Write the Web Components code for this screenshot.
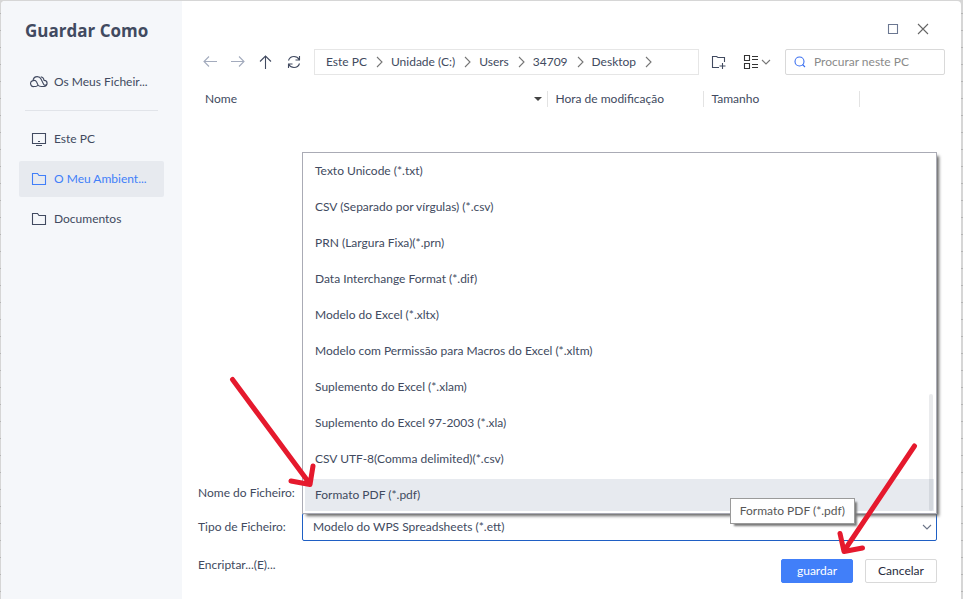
<!DOCTYPE html>
<html lang="pt">
<head>
<meta charset="utf-8">
<meta name="viewport" content="width=device-width, initial-scale=1">
<title>Guardar Como</title>
<style>
  * { box-sizing: border-box; }
  body {
    margin: 0;
    min-height: 100vh;
    padding: 1px 2px 0 1px;
    display: flex;
    font: 12px/16px Lato, "Open Sans", sans-serif;
    color: #414a60;
    /* spreadsheet grid behind the dialog */
    background:
      repeating-linear-gradient(to bottom, transparent 0 13px, #b5b5b5 13px 14px, transparent 14px 17px),
      #d6d6d6;
  }
</style>
</head>
<body>
<save-dialog>
  <side-nav slot="nav" heading="Guardar Como">
    <nav-item slot="top" icon="cloud">Os Meus Ficheir...</nav-item>
    <nav-item icon="pc">Este PC</nav-item>
    <nav-item icon="folder" active>O Meu Ambient...</nav-item>
    <nav-item icon="folder">Documentos</nav-item>
  </side-nav>
  <window-controls></window-controls>
  <path-toolbar path="Este PC/Unidade (C:)/Users/34709/Desktop"></path-toolbar>
  <file-table></file-table>
  <save-form slot="form"></save-form>
</save-dialog>
<pointer-arrows></pointer-arrows>

<script>
const ICONS = {
  cloud: `<svg width="18" height="16" viewBox="0 0 18 16"><path d="M5.500 12.500H4.200A3 3 0 0 1 3 6.600C3.300 4.300 5 2.600 7.300 2.600c1.800 0 3 .8 3.700 2.300l2.600 5.300c.9 1.800 3.500 1 3.500-1.200 0-1.700-1.500-2.700-3-2.400M3 6.800c1.500-.7 2.900-.1 3.600 1.200l1.300 2.700c.8 1.500 2.200 1.800 3.500 1.800h2.600a3 3 0 0 0 3.100-3.100c0-1.800-1.300-3-3-3-.3-2.100-1.600-3.500-3.300-3.700M5.500 12.500c1.300 0 2-.7 2.400-1.600"/></svg>`,
  pc: `<svg width="18" height="16" viewBox="0 0 18 16"><path d="M2.500 2.500h13v10h-13zM6 14.500h6M8 10.500h2"/></svg>`,
  folder: `<svg width="18" height="16" viewBox="0 0 18 16"><path d="M2.500 2.500h5l1.500 2h6.500v9h-13z"/></svg>`,
  back: `<svg width="16" height="16" viewBox="0 0 16 16"><path d="M15 7.500H2M7 2.500l-5 5 5 5"/></svg>`,
  forward: `<svg width="16" height="16" viewBox="0 0 16 16"><path d="M1 7.500h13M9 2.500l5 5-5 5"/></svg>`,
  up: `<svg width="16" height="16" viewBox="0 0 16 16"><path d="M7.500 15V2M2 7.500L7.500 2 13 7.500"/></svg>`,
  refresh: `<svg width="16" height="16" viewBox="0 0 16 16"><path d="M2.500 6.500C3.300 4 5.500 2.500 8 2.500c2.300 0 4 1 5.200 3M13.500 2v4h-4M13.500 9.500c-.8 2.500-3 4-5.500 4-2.300 0-4-1-5.200-3M2.500 14v-4h4"/></svg>`,
  newFolder: `<svg width="16" height="16" viewBox="0 0 16 16"><path d="M8 13.500H1.500v-11h4l1.500 1h6.500V8M11.500 9v6M8.500 12h6"/></svg>`,
  view: `<svg width="16" height="16" viewBox="0 0 16 16"><path d="M1.500 1.500h5v5h-5zM1.500 9.500h5v5h-5zM9 2.500h6M9 5.500h6M9 10.500h6M9 13.500h6"/></svg>`,
  down: `<svg width="10" height="8" viewBox="0 0 10 8"><path d="M1 2l4 4 4-4"/></svg>`,
  right: `<svg width="8" height="12" viewBox="0 0 8 12"><path d="M2 1l5 5-5 5"/></svg>`,
  search: `<svg width="12" height="12" viewBox="0 0 12 12"><circle cx="5.500" cy="5.500" r="4.500"/><path d="M8.500 8.500l2.500 2.500"/></svg>`,
  maximize: `<svg width="12" height="12" viewBox="0 0 12 12"><path d="M1.500 1.500h9v9h-9z"/></svg>`,
  close: `<svg width="12" height="12" viewBox="0 0 12 12"><path d="M1 1l10 10M11 1L1 11"/></svg>`
};

const BASE = `
  * { box-sizing: border-box; }
  :host { display: block; }
  button, input, select { font: inherit; color: inherit; margin: 0; }
  button { padding: 0; border: 0; background: none; cursor: pointer; }
  svg { display: block; flex: none; fill: none; stroke: currentColor; stroke-width: 1.1; }
`;

class SaveDialog extends HTMLElement {
  constructor() {
    super();
    this.attachShadow({ mode: "open" }).innerHTML = `
      <style>
        ${BASE}
        :host {
          flex: 1;
          display: flex;
          background: #fff;
          border-radius: 4px 4px 0 0;
          overflow: hidden;
        }
        main {
          flex: 1;
          min-width: 0;
          display: flex;
          flex-direction: column;
          padding: 16px 16px 16px 14px;
        }
        .fill { flex: 1; }
      </style>
      <slot name="nav"></slot>
      <main>
        <slot></slot>
        <div class="fill"></div>
        <slot name="form"></slot>
      </main>
    `;
  }
}

class SideNav extends HTMLElement {
  connectedCallback() {
    this.attachShadow({ mode: "open" }).innerHTML = `
      <style>
        ${BASE}
        :host { flex: none; width: 181px; background: #f5f7fa; padding: 16px 18px; }
        h1 { margin: 0 0 19px; padding-left: 6px; font: 700 17px/28px "Open Sans", sans-serif; white-space: nowrap; }
        hr { margin: 10px 6px 10px; border: 0; border-top: 1px solid #e1e4e9; }
        nav { display: flex; flex-direction: column; gap: 4px; }
      </style>
      <h1>${this.getAttribute("heading")}</h1>
      <slot name="top"></slot>
      <hr>
      <nav><slot></slot></nav>
    `;
  }
}

class NavItem extends HTMLElement {
  connectedCallback() {
    this.attachShadow({ mode: "open" }).innerHTML = `
      <style>
        ${BASE}
        a {
          display: flex;
          align-items: center;
          gap: 6px;
          height: 36px;
          padding: 0 11px;
          border-radius: 2px;
          color: inherit;
          text-decoration: none;
          white-space: nowrap;
        }
        :host([active]) a { background: #e7eaef; color: #417ff9; }
      </style>
      <a href="#">${ICONS[this.getAttribute("icon")]}<span><slot></slot></span></a>
    `;
  }
}

class WindowControls extends HTMLElement {
  connectedCallback() {
    this.attachShadow({ mode: "open" }).innerHTML = `
      <style>
        ${BASE}
        :host { display: flex; justify-content: flex-end; gap: 18px; padding: 6px 16px 0 0; color: #6b7791; }
        .close { color: #666; }
      </style>
      <button aria-label="Maximizar">${ICONS.maximize}</button>
      <button class="close" aria-label="Fechar">${ICONS.close}</button>
    `;
  }
}

class PathToolbar extends HTMLElement {
  connectedCallback() {
    const crumbs = this.getAttribute("path").split("/")
      .map(name => `<a href="#">${name}</a>${ICONS.right}`).join("");

    this.attachShadow({ mode: "open" }).innerHTML = `
      <style>
        ${BASE}
        :host { display: flex; align-items: center; padding-top: 14px; }
        .tool { width: 28px; height: 26px; display: flex; align-items: center; justify-content: center; flex: none; }
        .tool:disabled { color: #a3abbd; }
        .path {
          flex: 1;
          min-width: 0;
          height: 26px;
          margin: 0 6px;
          padding: 0 11px;
          display: flex;
          align-items: center;
          gap: 8px;
          border: 1px solid #e6e6e6;
          white-space: nowrap;
        }
        .path a { color: inherit; text-decoration: none; }
        .path svg { color: #777; }
        .view { width: 36px; margin-left: 6px; gap: 2px; color: #333; }
        .view svg + svg { color: #777; }
        .search {
          width: 160px;
          height: 26px;
          margin-left: 10px;
          padding: 0 8px;
          display: flex;
          align-items: center;
          gap: 8px;
          border: 1px solid #d9d9d9;
          border-radius: 2px;
          color: #3a6ff0;
        }
        input { flex: 1; min-width: 0; padding: 0; border: 0; outline: 0; background: none; }
        input::placeholder { color: #8a8a8a; opacity: 1; }
      </style>
      <button class="tool" aria-label="Anterior" disabled>${ICONS.back}</button>
      <button class="tool" aria-label="Seguinte" disabled>${ICONS.forward}</button>
      <button class="tool" aria-label="Subir">${ICONS.up}</button>
      <button class="tool" aria-label="Atualizar">${ICONS.refresh}</button>
      <nav class="path">${crumbs}</nav>
      <button class="tool" aria-label="Nova pasta">${ICONS.newFolder}</button>
      <button class="tool view" aria-label="Vista">${ICONS.view}${ICONS.down}</button>
      <label class="search">${ICONS.search}<input type="text" placeholder="Procurar neste PC" aria-label="Procurar"></label>
    `;
  }
}

class FileTable extends HTMLElement {
  connectedCallback() {
    this.attachShadow({ mode: "open" }).innerHTML = `
      <style>
        ${BASE}
        :host { padding: 16px 0 0 1px; }
        table { width: 100%; table-layout: fixed; border-collapse: collapse; }
        th { padding: 0; font-weight: normal; text-align: left; }
        th div { display: flex; align-items: center; justify-content: space-between; height: 16px; padding: 0 5px 0 8px; }
        .date, .size { width: 156px; }
        .rest { width: 86px; }
        th + th { border-left: 1px solid #e3e3e3; }
        .sort { border: 4px solid transparent; border-top-color: #444; border-bottom: 0; }
      </style>
      <table>
        <thead>
          <tr>
            <th><div>Nome<span class="sort"></span></div></th>
            <th class="date"><div>Hora de modificação</div></th>
            <th class="size"><div>Tamanho</div></th>
            <th class="rest"></th>
          </tr>
        </thead>
      </table>
    `;
  }
}

class SaveForm extends HTMLElement {
  connectedCallback() {
    this.attachShadow({ mode: "open" }).innerHTML = `
      <style>
        ${BASE}
        :host { padding: 0 8px 0 2px; }
        .row { display: flex; align-items: center; height: 28px; margin-bottom: 6px; }
        .row label { flex: none; width: 104px; white-space: nowrap; }
        .field { flex: 1; min-width: 0; position: relative; }
        input, select {
          display: block;
          width: 100%;
          height: 28px;
          padding: 0 10px;
          border: 1px solid #d9d9d9;
          border-radius: 2px;
          background: #fff;
          appearance: none;
          outline: 0;
        }
        select { border-color: #1f5fc4; }
        .field svg { position: absolute; right: 5px; top: 10px; color: #6b7487; pointer-events: none; }
        type-list { position: absolute; left: 0; right: 0; bottom: 27px; }
        footer { display: flex; align-items: flex-start; gap: 12px; padding-top: 12px; }
        .encrypt { margin: -2px auto 0 0; }
        .action {
          width: 72px;
          height: 24px;
          border: 1px solid #d9d9d9;
          border-radius: 2px;
          color: #262b3d;
        }
        .primary { border-color: #417ff9; background: #417ff9; color: #fff; }
      </style>
      <div class="row">
        <label for="name">Nome do Ficheiro:</label>
        <div class="field"><input id="name" type="text"></div>
      </div>
      <div class="row">
        <label for="type">Tipo de Ficheiro:</label>
        <div class="field">
          <select id="type"><option>Modelo do WPS Spreadsheets (*.ett)</option></select>
          ${ICONS.down}
          <type-list></type-list>
        </div>
      </div>
      <footer>
        <button class="encrypt">Encriptar...(E)...</button>
        <button class="action primary">guardar</button>
        <button class="action">Cancelar</button>
      </footer>
    `;
  }
}

class TypeList extends HTMLElement {
  connectedCallback() {
    const types = [
      "Texto Unicode (*.txt)",
      "CSV (Separado por vírgulas) (*.csv)",
      "PRN (Largura Fixa)(*.prn)",
      "Data Interchange Format (*.dif)",
      "Modelo do Excel (*.xltx)",
      "Modelo com Permissão para Macros do Excel (*.xltm)",
      "Suplemento do Excel (*.xlam)",
      "Suplemento do Excel 97-2003 (*.xla)",
      "CSV UTF-8(Comma delimited)(*.csv)",
      "Formato PDF (*.pdf)"
    ];

    this.attachShadow({ mode: "open" }).innerHTML = `
      <style>
        ${BASE}
        :host {
          padding: 2px;
          border: 1px solid #aaabb5;
          background: #fff;
          box-shadow: 3px 3px 3px -1px #666;
        }
        .list { display: flex; flex-direction: column; gap: 4px; }
        button { height: 32px; padding: 0 10px; text-align: left; }
        .hover { background: #e7eaef; }
        .bar { position: absolute; right: 3px; bottom: 2px; width: 4px; height: 117px; border-radius: 2px; background: rgba(60, 70, 90, .11); }
        .tip {
          position: absolute;
          right: 81px;
          bottom: -11px;
          padding: 4px 9px;
          border: 1px solid #9a9a9a;
          background: #fff;
          box-shadow: 3px 3px 2px -1px #777;
          color: #575757;
          white-space: nowrap;
        }
      </style>
      <div class="list" role="listbox" aria-label="Tipo de Ficheiro">
        ${types.map(t => `<button role="option">${t}</button>`).join("")}
      </div>
      <div class="bar"></div>
      <div class="tip" role="tooltip">Formato PDF (*.pdf)</div>
    `;

    this.shadowRoot.querySelector("button:last-child").classList.add("hover");
  }
}

// red arrows drawn over the dialog
class PointerArrows extends HTMLElement {
  connectedCallback() {
    this.attachShadow({ mode: "open" }).innerHTML = `
      <style>
        ${BASE}
        :host { position: absolute; left: 0; top: 0; pointer-events: none; }
        svg { stroke: #e5192d; stroke-width: 5; stroke-linecap: round; stroke-linejoin: round; }
      </style>
      <svg width="940" height="580" viewBox="0 0 940 580">
        <path d="M232.500 379.500L310 484M313 466l-3 18.500-19-3.500"/>
        <path d="M914.500 446L844 551M840 533.500l4 18 18.500-3.500"/>
      </svg>
    `;
  }
}

customElements.define("save-dialog", SaveDialog);
customElements.define("side-nav", SideNav);
customElements.define("nav-item", NavItem);
customElements.define("window-controls", WindowControls);
customElements.define("path-toolbar", PathToolbar);
customElements.define("file-table", FileTable);
customElements.define("type-list", TypeList);
customElements.define("save-form", SaveForm);
customElements.define("pointer-arrows", PointerArrows);
</script>
</body>
</html>
